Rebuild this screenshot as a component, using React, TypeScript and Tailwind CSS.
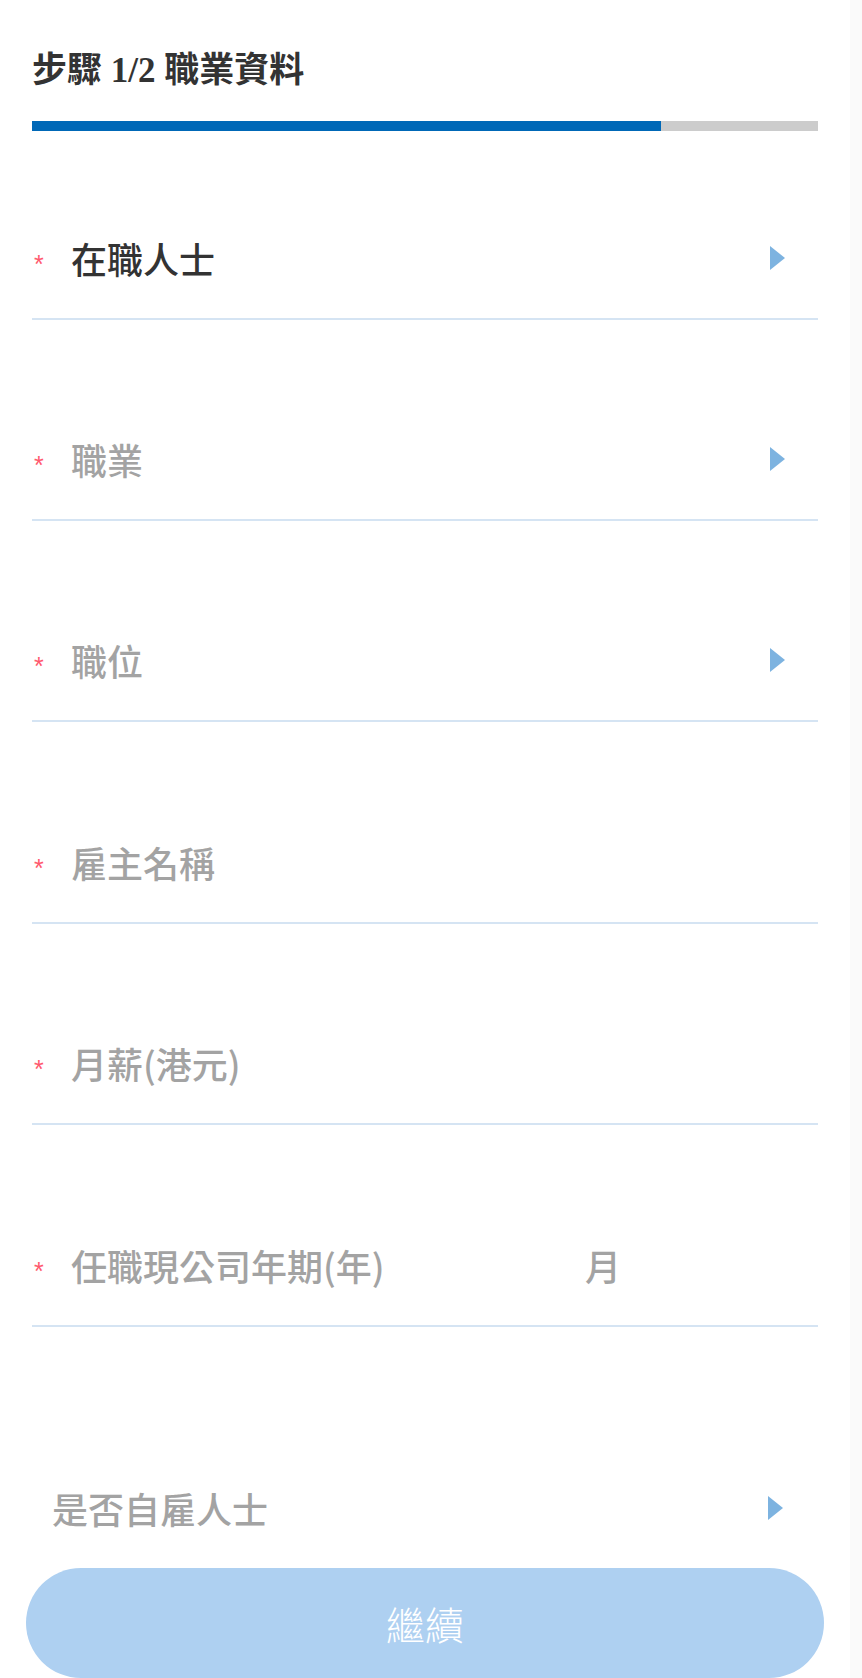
import React from 'react';

interface Field {
  label: string;
  required?: boolean;
  filled?: boolean;
  arrow?: boolean;
  extra?: string;
  height: string;
}

const fields: Field[] = [
  { label: '在職人士', required: true, filled: true, arrow: true, height: 'h-[189px]' },
  { label: '職業', required: true, arrow: true, height: 'h-[201px]' },
  { label: '職位', required: true, arrow: true, height: 'h-[201px]' },
  { label: '雇主名稱', required: true, height: 'h-[202px]' },
  { label: '月薪(港元)', required: true, height: 'h-[201px]' },
  { label: '任職現公司年期(年)', required: true, extra: '月', height: 'h-[202px]' },
];

const font = { fontFamily: '"Noto Sans CJK TC", "Noto Sans", sans-serif' };

function Arrow() {
  return (
    <svg width="15" height="24" viewBox="0 0 15 24" className="shrink-0">
      <path d="M0 0 L15 12 L0 24 Z" fill="#7db3e0" />
    </svg>
  );
}

function Asterisk() {
  return (
    <span
      className="w-[39px] shrink-0 pl-[2px] text-[25px] leading-[48px] text-[#ff5a6e] translate-y-[6px]"
      style={{ fontFamily: '"Liberation Sans", sans-serif' }}
    >
      *
    </span>
  );
}

function Row({ field }: { field: Field }) {
  return (
    <div className={`flex items-end border-b-2 border-[#d5e4f3] pb-[36px] ${field.height}`}>
      <div className="flex flex-1 items-center h-[48px]">
        {field.required && <Asterisk />}
        {field.extra ? (
          <>
            <span className="w-[514px] text-[36px] leading-[48px] font-medium text-[#a3a3a3]">{field.label}</span>
            <span className="text-[36px] leading-[48px] font-medium text-[#a3a3a3]">{field.extra}</span>
          </>
        ) : (
          <span
            className={`flex-1 text-[36px] leading-[48px] font-medium ${field.filled ? 'text-[#333333]' : 'text-[#a3a3a3]'}`}
          >
            {field.label}
          </span>
        )}
        {field.arrow && (
          <div className="pr-[33px] flex items-center">
            <Arrow />
          </div>
        )}
      </div>
    </div>
  );
}

export default function App() {
  return (
    <div className="flex w-[862px] min-h-[1678px] bg-white" style={font}>
      <div className="w-[850px] flex flex-col">
        <div className="px-[32px]">
          {/* Step header */}
          <h1
            className="pt-[51px] h-[91px] text-[35px] leading-[40px] font-bold text-[#333333]"
            style={{ fontFamily: '"Liberation Serif", "Noto Sans CJK TC", serif' }}
          >
            步驟 1/2 職業資料
          </h1>

          {/* Progress bar */}
          <div className="mt-[30px] h-[10px] bg-[#cccccc] flex">
            <div className="h-full w-[80%] bg-[#0068b7]" />
          </div>

          {fields.map((f) => (
            <Row key={f.label} field={f} />
          ))}

          {/* Self-employed */}
          <div className="flex items-end h-[217px] pb-[12px]">
            <div className="flex flex-1 items-center h-[48px] pl-[20px]">
              <span className="flex-1 text-[36px] leading-[48px] font-medium text-[#a3a3a3]">是否自雇人士</span>
              <div className="pr-[35px] flex items-center">
                <Arrow />
              </div>
            </div>
          </div>
        </div>

        <div className="px-[26px] pt-[24px]">
          <button className="w-full h-[110px] rounded-full bg-[#aed0f1] text-white text-[39px] font-light">
            繼續
          </button>
        </div>
      </div>
      <div className="w-[12px] bg-[#fafafa]" />
    </div>
  );
}
